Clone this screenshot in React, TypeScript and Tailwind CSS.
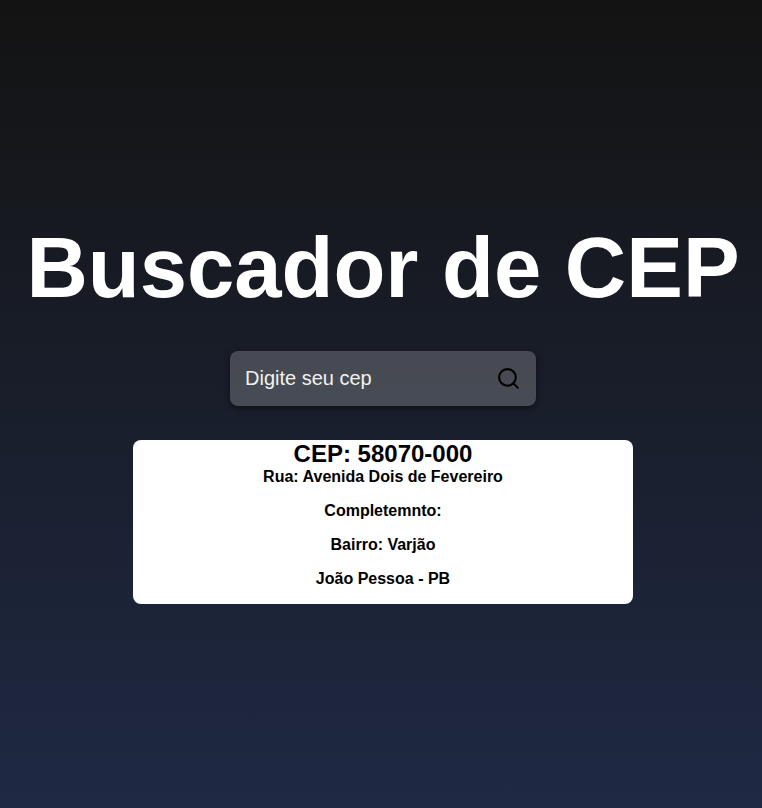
import { useState } from "react";
import { FiSearch } from "react-icons/fi";

export default function App() {
  const [cep, setCep] = useState("");

  return (
    <div className="flex min-h-screen flex-col items-center justify-center bg-linear-to-b from-[#131313] to-[#1f2944] pt-[14px] pl-1 font-['Liberation_Sans',Arial,sans-serif]">
      <h1 className="text-[85px] leading-[98px] font-bold whitespace-nowrap text-white">
        Buscador de CEP
      </h1>

      <form
        className="my-[34px] flex items-center rounded-lg bg-white/20 py-[7px] pr-[15px] pl-[10px] shadow-[0_2px_6px_rgba(0,0,0,0.5)]"
        onSubmit={(event) => event.preventDefault()}
      >
        <input
          type="text"
          aria-label="Digite seu cep"
          placeholder="Digite seu cep"
          value={cep}
          onChange={(event) => setCep(event.target.value)}
          className="h-[41px] w-60 bg-transparent px-[5px] text-xl text-white outline-none placeholder:text-[#f1f1f1]"
        />
        <button type="submit" aria-label="Buscar" className="ml-4 cursor-pointer">
          <FiSearch size={25} color="#000" />
        </button>
      </form>

      <main className="flex w-[500px] max-w-full flex-col items-center rounded-lg bg-white pb-4 font-bold text-black">
        <h2 className="text-2xl leading-[28px]">CEP: 58070-000</h2>
        <div className="flex flex-col items-center gap-4 text-base leading-[18px]">
          <span>Rua: Avenida Dois de Fevereiro</span>
          <span>Completemnto:</span>
          <span>Bairro: Varjão</span>
          <span>João Pessoa - PB</span>
        </div>
      </main>
    </div>
  );
}
